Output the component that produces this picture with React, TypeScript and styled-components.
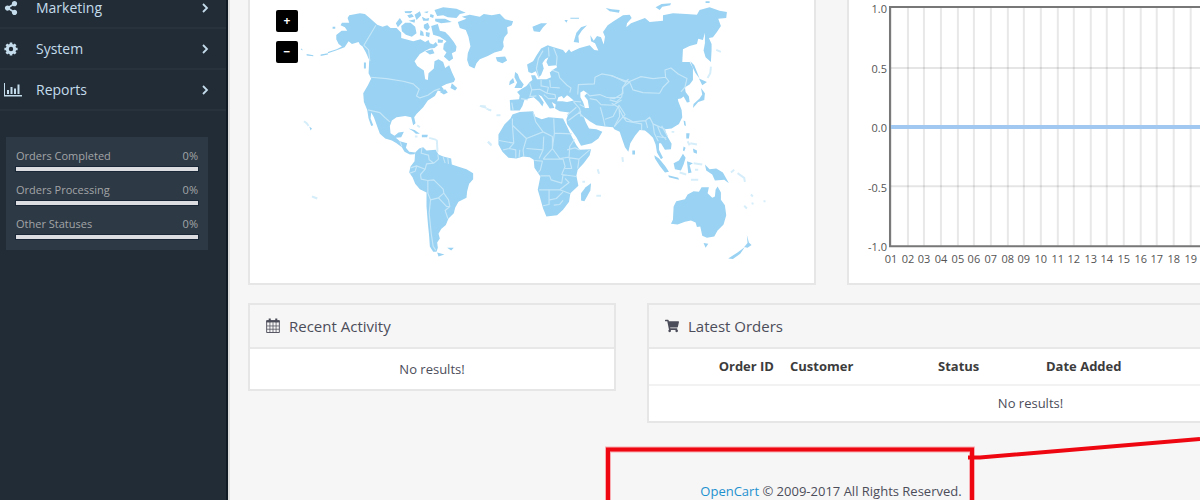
import React from "react";
import styled, { createGlobalStyle } from "styled-components";
import { FaShareAlt, FaShoppingCart } from "react-icons/fa";

const GlobalStyle = createGlobalStyle`
  * { box-sizing: border-box; }
  body {
    margin: 0;
    background: #f6f6f6;
    color: #4c4d5a;
    font-family: "Open Sans", "Noto Sans", sans-serif;
    font-size: 12px;
    font-weight: 500;
    line-height: 18px;
  }
`;

const Page = styled.div`
  position: relative;
  display: flex;
  height: 100vh;
  overflow: hidden;
`;

const Sidebar = styled.aside`
  flex: none;
  width: 230px;
  background: #222c36;
  border-right: 2px solid #dedede;
  box-shadow: inset -2px 0 #111b25;
`;

const Menu = styled.ul`
  list-style: none;
  margin: -12px 2px 0 0;
  padding: 0;
`;

const MenuItem = styled.li`
  border-bottom: 2px solid #27323c;
`;

const MenuLink = styled.a`
  display: flex;
  align-items: center;
  height: 39px;
  padding: 0 16px 0 4px;
  color: #c4dcec;
  font-size: 14px;
  text-decoration: none;

  span { flex: 1; }
`;

const MenuIcon = styled.i`
  display: flex;
  width: 32px;
`;

const Stats = styled.dl`
  margin: 26px 20px 0 6px;
  padding: 11px 10px;
  background: #2d3945;
  color: #a3a5a7;
  font-size: 11px;
  line-height: 16px;
`;

const Stat = styled.div`
  display: grid;
  grid-template-columns: 1fr auto;
  grid-template-rows: 19px 4px;
  height: 34px;
  dt, dd { margin: 0; }
  &:last-child { height: 23px; }
`;

const Bar = styled.div`
  grid-column: 1 / -1;
  background: #dcdde0;
  box-shadow: 0 0 0 1px #1a2737;
`;

const Main = styled.main`
  flex: 1;
  min-width: 0;
  padding: 0 18px;
`;

const Content = styled.div`
  display: grid;
  grid-template-columns: repeat(12, 1fr);
  gap: 18px 31px;
  align-items: start;
  min-width: 1166px;
`;

const Panel = styled.section<{ $span: number; $open?: boolean }>`
  position: relative;
  grid-column: span ${(p) => p.$span};
  background: #fff;
  border: 2px solid #e6e6e6;
  border-top-width: ${(p) => (p.$open ? 0 : 2)}px;

  > svg { display: block; width: 100%; }
`;

const PanelHead = styled.h3`
  display: flex;
  align-items: center;
  gap: 9px;
  height: 44px;
  margin: 0;
  padding: 0 16px;
  background: #f6f6f6;
  border-bottom: 2px solid #e8e8e8;
  color: #4c4d5a;
  font-size: 15px;
  font-weight: 500;
`;

const Empty = styled.p`
  margin: 0;
  padding: 11px 8px;
  font-size: 13px;
  text-align: center;
`;

const ZoomControls = styled.div`
  position: absolute;
  top: 10px;
  left: 26px;
  display: grid;
  gap: 9px;
`;

const ZoomButton = styled.button`
  width: 22px;
  height: 22px;
  padding: 0;
  border: 0;
  border-radius: 2px;
  background: #000;
  color: #fff;
  font: 700 12px/20px "Open Sans", sans-serif;
`;

const Table = styled.table`
  width: 100%;
  border-collapse: collapse;
  table-layout: fixed;
  font-size: 13px;

  th, td { height: 36px; padding: 0 8px; text-align: left; }
  th { color: #3c3c3c; font-weight: 700; }
  th:first-child { text-align: right; }
  td { border-top: 2px solid #f2f2f2; text-align: center; }
`;

const Footer = styled.footer`
  min-width: 1166px;
  padding: 59px 0 20px;
  font-size: 13px;
  text-align: center;

  a { color: #1e91cf; text-decoration: none; }
`;

const Callout = styled.svg`
  position: absolute;
  top: 0;
  left: 0;
  pointer-events: none;
`;

const CogIcon = () => (
  <svg width="14" height="14" viewBox="0 0 14 14" fill="none" stroke="currentColor">
    <circle cx="7" cy="7" r="3.700" strokeWidth="3" />
    <path
      strokeWidth="2.600"
      d="M7 .4v2.500M7 11.100v2.500M.4 7h2.500M11.100 7h2.500M2.400 2.400l1.600 1.600M10 10l1.600 1.600M2.400 11.600L4 10M10 4l1.600-1.600"
    />
  </svg>
);

const BarChartIcon = () => (
  <svg width="18" height="14" viewBox="0 0 18 14" fill="currentColor">
    <path d="M0 0h1v12h17v1.500H0zM3 7h2v4H3zM6.500 4h2v7h-2zM10 5.500h2V11h-2zM13.500 1.500h2V11h-2z" />
  </svg>
);

const ChevronIcon = () => (
  <svg width="9" height="12" viewBox="0 0 9 12" fill="none" stroke="currentColor" strokeWidth="1.800">
    <path d="M2 2l4 4-4 4" />
  </svg>
);

const CalendarIcon = () => (
  <svg width="14" height="17" viewBox="0 0 15 17" fill="none" stroke="currentColor">
    <path d="M.7 3.500h13.600v12.500H.7z" />
    <path d="M.5 4h14" strokeWidth="2.400" />
    <path d="M4 1v4M11 1v4" strokeWidth="2.200" />
    <path d="M4.200 5v11M7.500 5v11M10.800 5v11M1 9h13M1 12.500h13" strokeWidth=".8" />
  </svg>
);

const AMERICAS = [
  "M109 105L125 92 142 92 135 82 122 76 126 68 148 68 143 54 148 46 180 40 195 42 212 56 232 74 248 80 262 76 272 84 290 84 304 98 304 114 318 118 340 124 362 118 376 126 386 120 390 130 400 134 408 126 414 136 404 144 390 146 378 152 360 162 344 184 352 198 372 212 376 238 384 240 386 220 402 206 404 184 416 178 430 186 436 204 448 196 456 216 466 238 462 246 440 252 425 260 432 268 428 276 414 272 405 288 384 302 370 322 350 342 343 352 347 370 340 376 334 352 316 348 290 352 276 362 270 378 272 400 284 408 296 398 312 396 304 412 288 414 300 424 322 430 318 444 328 456 346 458 344 463 330 464 314 456 306 442 290 430 276 422 256 416 240 402 232 380 222 352 214 338 212 356 220 376 214 378 206 356 202 330 192 306 190 280 204 256 214 236 206 220 208 180 198 158 188 140 180 134 176 126 156 132 146 124 134 142 108 152 84 160 84 156 110 148 126 140 116 132 109 118Z",
  "M346 458L358 446 370 442 380 452 408 450 416 464 430 470 454 476 456 494 474 500 500 508 520 520 520 538 508 552 502 574 500 594 476 606 466 624 462 640 446 656 438 676 424 688 416 702 420 716 412 728 414 744 410 756 400 756 390 740 388 710 384 670 380 620 380 578 360 568 346 552 338 532 328 518 332 500 344 484Z",
  "M412 758L434 764 416 770ZM442 744L462 744 454 752Z",
  "M474 66L500 56 486 50 510 44 540 50 552 42 576 46 600 41 616 58 640 64 636 76 622 82 624 100 614 112 610 126 612 140 606 152 584 158 564 168 540 178 530 190 524 206 508 198 502 180 504 160 512 140 506 110 498 90 480 84Z",
  "M304 78L316 68 332 68 346 80 350 100 336 110 318 104 306 94ZM288 70L300 54 308 66 294 82ZM314 34L338 33 332 40 316 39ZM322 46L336 42 342 50 328 54ZM344 44L360 34 364 46 350 60ZM326 62L346 58 344 68ZM366 50L378 56 388 54 386 62 370 62ZM372 74L384 68 390 82 382 92 372 84ZM362 90L370 96 372 108 360 106ZM378 96L390 98 388 112 378 108ZM372 36L386 34 382 40ZM392 42L402 46 400 54 390 50Z",
  "M404 30L430 22 470 26 498 38 480 42 470 54 444 52 430 46 412 48ZM406 56L436 56 456 66 424 70 406 64ZM394 78L414 72 420 92 436 96 448 108 462 126 470 140 468 154 456 160 460 176 448 184 432 170 440 158 430 148 432 132 440 124 420 110 400 104ZM376 154L398 148 404 160 390 164ZM414 118L430 120 428 128 414 128Z",
  "M456 250L472 264 466 272 452 264ZM436 268L444 278 432 284 420 276ZM326 386L344 390 360 402 348 402 340 394ZM366 405L384 405 382 412 366 412ZM28 380L36 386 32 392ZM2 148l4-2 2 6zM20 162l20 4v3l-20-2zM62 164l22-4v4l-22 4zM98 80h8v6h-8zM192 188h6v18h-6z",
];

const AMERICAS_FAINT =
  "M12 364l8 6 6 8M352 376l8 6M345 410h8M388 414l22 6M411 420l2 36M544 318l14 2M560 326l14 6M36 590l16 6M565 425l10 12M540 210";

const AMERICAS_BORDERS =
  "M228 76L192 136 206 150 210 184M212 232L260 236 310 244 340 252 358 268 350 288 360 294 384 286 404 272 420 266M204 330L240 338 254 352 270 366M300 424L306 440M366 444L364 460 386 466 388 480 402 490 416 478 414 464M430 472L436 490M444 474L446 492M402 490L380 492 376 508 362 524 364 538 384 542 402 540 430 568 432 580 446 600 450 620 436 632 444 656M332 504L350 498 376 508M330 520L346 514 350 500M384 542L384 580 392 600 388 640 394 700 400 740 408 752M392 600L416 594 432 580M416 594L440 620 450 620";

const OLD_WORLD = [
  "M90 300L118 298 120 286 112 276 124 268 140 258 150 246 158 240 154 226 166 226 172 238 200 238 214 232 210 218 222 208 232 202 230 196 206 198 200 186 206 172 196 178 188 190 192 206 184 226 176 232 168 214 156 220 146 216 142 194 160 184 172 164 184 146 204 136 222 142 250 150 258 160 268 148 274 156 300 144 330 136 344 150 356 152 346 130 334 124 332 106 342 122 352 108 364 112 372 134 376 110 370 96 384 76 404 62 430 46 450 44 456 54 442 70 440 82 454 70 480 60 496 54 510 66 550 62 550 46 580 40 620 42 652 44 660 30 690 22 720 32 742 36 740 54 716 56 724 78 712 96 700 112 688 114 696 132 696 150 694 186 678 172 672 152 676 130 676 98 670 120 656 116 652 132 630 138 610 148 608 186 630 186 640 204 640 240 630 254 616 262 618 276 628 290 630 306 622 308 612 290 604 296 588 298 580 292 592 284 596 304 606 330 608 352 598 372 576 386 556 388 562 408 576 432 574 448 556 450 544 430 538 430 538 450 550 474 544 478 532 458 528 434 520 414 508 402 496 392 480 390 466 408 452 430 446 456 436 442 426 414 420 396 404 388 400 382 376 380 350 376 330 364 312 350 318 366 328 386 350 388 368 396 356 416 336 430 304 438 290 412 262 372 260 358 268 338 240 334 226 326 228 314 216 306 224 324 210 326 198 308 186 290 176 284 192 308 188 320 178 306 162 292 146 296 134 300 128 318 120 332 92 332Z",
  "M98 344L120 336 160 334 166 350 186 358 206 352 250 356 262 380 276 410 290 436 300 450 334 448 330 466 312 490 294 510 290 528 296 558 272 580 268 606 250 630 232 646 200 650 190 626 180 590 174 570 182 530 164 504 162 480 150 472 130 470 110 476 86 474 68 456 56 434 56 404 74 374 92 356Z",
  "M334 550L332 572 314 604 304 602 304 580 318 562Z",
  "M106 216L114 222 120 238 132 254 126 264 104 264 112 248 104 232ZM90 244L100 234 104 248 88 256ZM48 172L76 170 82 182 68 190 52 184ZM158 80L184 70 202 70 190 82 180 96 162 94ZM322 76L306 92 296 108 298 128 282 126 290 98 304 82ZM254 60l10 0-4 8zM272 53h26v3h-26zM378 24L396 28 420 30 418 38 390 34ZM528 22L546 12 574 10 572 16 548 20 540 30ZM678 4h12v5h-12z",
  "M632 184L644 196 656 226 660 236 648 220 638 200ZM658 236L682 246 668 256ZM664 264L676 280 674 300 656 306 640 324 642 312 660 296 668 284ZM612 362l5 2 2 14-5-2zM620 400h10l-2 16h-8z",
  "M524 466L538 476 556 498 568 516 556 518 540 498 526 476ZM566 526L596 534 598 540 568 532ZM582 490L598 482 610 462 618 474 612 494 604 512 586 508ZM622 484L640 490 630 496 636 518 626 520ZM676 494L690 508 710 506 730 518 748 550 734 540 706 542 698 524 680 512ZM640 446l12 6v10l-10-4zM612 440l6 4-4 10-4-2zM458 452h8v12h-8z",
  "M574 672L580 660 582 620 590 604 616 598 624 584 642 574 658 576 666 562 688 562 684 580 698 594 706 590 708 570 714 560 724 578 724 600 736 616 740 646 732 674 714 692 704 710 682 714 668 708 662 680 652 682 648 668 634 662 616 666 594 674Z",
  "M672 730L686 732 678 744ZM802 706L808 728 816 736 804 744 794 742 804 730ZM796 742L782 762 760 778 746 776 774 758Z",
];

const OLD_WORLD_FAINT =
  "M0 318l20 6M26 330h8M50 346h12M24 426l10 8M354 508l4 14M308 546h8M350 588h14M428 472l2 14M428 472M710 150l14 6M600 518l20 6M634 540l22 0M642 490l26 4M646 510h10M754 518l10-8M774 520l20 14 2 12M814 584l6 6M794 618l8 8M852 604h6M818 608l2 6M632 430l20 4M624 424l6 12M576 396h8M694 200l-2 20-8 14";

const OLD_WORLD_BORDERS = [
  "M178 234L170 206 176 176 190 152M206 142L208 170M222 144L232 170 230 196M216 210L236 218 240 234 262 256 274 264 270 278M210 240L212 262 240 264M184 240L184 258 206 262 202 280 226 284 228 296M150 250L156 270 150 290 170 288M156 270L180 268 202 280M96 308L100 330M124 296L144 300M192 284L206 296 226 296",
  "M294 284L296 254 344 252 346 232 366 222 400 228 436 246 446 238 428 264 430 280 404 296 380 292 360 284 330 288 320 278M330 296L350 300 364 314 400 316 426 300M390 300L410 306 424 294M300 314L320 324M282 306L300 326 304 350M290 322L262 346M304 334L266 362M296 336L312 352M362 322L370 352 376 378M376 358L400 350 418 316 436 344 404 380M280 304L304 306",
  "M390 226L446 246 484 230 520 236 558 232 568 244 550 262 540 280 490 278 460 270 450 246M558 232L556 210 574 204 596 222 622 236 616 262 604 276M390 294L426 292 430 262 450 246M396 310L416 322 430 350 460 366 498 362 510 352 520 372 556 388M418 324L420 350 404 380M430 350L440 364 486 372 486 390M498 362L504 384M520 372L524 400 536 424M534 380L544 404 560 420M546 378L564 410M532 410L560 414",
  "M98 376L140 416 190 396 168 366 160 336M98 376L98 356M222 356L224 400 276 402M190 396L218 410 218 446 190 478M140 416L130 450 132 470M58 422L102 430 98 376M102 430L88 446 108 450 108 474M70 450L88 446M120 450L118 472M140 446L190 450 192 410M190 450L178 476M224 400L218 446 240 476 268 472 270 440 284 418M190 478L250 478 256 500 246 524 290 530M270 474L298 478 330 450M298 478L294 506M268 472L276 506 256 506M164 482L188 484 182 510 176 518M182 528L210 528 214 540 246 550 250 524M178 570L240 570 268 548 256 536M208 570L208 614 190 618M240 570L272 582M210 600L230 596 250 576M222 616L240 614 250 602M262 450L286 444 300 450",
];

const HEADERS: { label: string; width?: number }[] = [
  { label: "Order ID", width: 133 },
  { label: "Customer", width: 148 },
  { label: "Status", width: 108 },
  { label: "Date Added" },
];

const STATS = ["Orders Completed", "Orders Processing", "Other Statuses"];

const MENU = [
  { label: "Marketing", icon: <FaShareAlt size={14} /> },
  { label: "System", icon: <CogIcon /> },
  { label: "Reports", icon: <BarChartIcon /> },
];

const Shapes = ({ land, faint, borders }: { land: string[]; faint: string; borders: string[] }) => (
  <>
    {land.map((d) => <path key={d} d={d} fill="#99d2f2" />)}
    <path d={faint} fill="none" stroke="#d6eefa" strokeWidth="6" />
    {borders.map((d) => (
      <path key={d} d={d} fill="none" stroke="#c5e6f8" strokeWidth="3.500" strokeLinejoin="round" />
    ))}
  </>
);

const WorldMap = () => (
  <svg viewBox="250 0 564 283" role="img" aria-label="World map">
    <g transform="translate(300 0) scale(.33333)">
      <Shapes land={AMERICAS} faint={AMERICAS_FAINT} borders={[AMERICAS_BORDERS]} />
    </g>
    <g transform="translate(480 0) scale(.33333)">
      <Shapes land={OLD_WORLD} faint={OLD_WORLD_FAINT} borders={OLD_WORLD_BORDERS} />
      <path
        fill="#fff"
        d="M232 304L236 292 246 288 252 296 262 286 268 290 282 302 262 306 248 304ZM302 278L312 272 322 280 314 288 324 300 328 324 316 324 310 306 302 292Z"
      />
    </g>
  </svg>
);

const DAYS = Array.from({ length: 19 }, (_, i) => String(i + 1).padStart(2, "0"));
const TICKS = ["1.0", "0.5", "0.0", "-0.5", "-1.0"];
const dayX = (i: number) => 41 + Math.round(i * 16.65);

const Chart = () => (
  <svg viewBox="0 0 564 283" role="img" aria-label="Sales analytics">
    {DAYS.map((day, i) => (
      <rect key={day} x={dayX(i)} y="7" width="2" height="239" fill="#e8e8e8" />
    ))}
    <path d="M41 68h500M41 186.500h500" stroke="#000" strokeOpacity=".1" strokeWidth="2" />
    <path d="M41 127h500" stroke="#a0c8f0" strokeWidth="4" />
    <path d="M41 7h500v239.500H41z" fill="none" stroke="#777" strokeWidth="2" />
    <g fill="#545454" fontSize="11">
      {TICKS.map((tick, i) => (
        <text key={tick} x="38" y={13 + Math.round(i * 59.5)} textAnchor="end">{tick}</text>
      ))}
      {DAYS.map((day, i) => (
        <text key={day} x={dayX(i) + 1} y="263" textAnchor="middle">{day}</text>
      ))}
    </g>
  </svg>
);

export default function App() {
  return (
    <Page>
      <GlobalStyle />
      <Sidebar>
        <Menu>
          {MENU.map(({ label, icon }) => (
            <MenuItem key={label}>
              <MenuLink href="#">
                <MenuIcon>{icon}</MenuIcon>
                <span>{label}</span>
                <ChevronIcon />
              </MenuLink>
            </MenuItem>
          ))}
        </Menu>
        <Stats>
          {STATS.map((label) => (
            <Stat key={label}>
              <dt>{label}</dt>
              <dd>0%</dd>
              <Bar />
            </Stat>
          ))}
        </Stats>
      </Sidebar>
      <Main>
        <Content>
          <Panel $span={6} $open>
            <WorldMap />
            <ZoomControls>
              <ZoomButton aria-label="Zoom in">+</ZoomButton>
              <ZoomButton aria-label="Zoom out">−</ZoomButton>
            </ZoomControls>
          </Panel>
          <Panel $span={6} $open>
            <Chart />
          </Panel>
          <Panel $span={4}>
            <PanelHead><CalendarIcon /> Recent Activity</PanelHead>
            <Empty>No results!</Empty>
          </Panel>
          <Panel $span={8}>
            <PanelHead><FaShoppingCart size={14} /> Latest Orders</PanelHead>
            <Table>
              <colgroup>
                {HEADERS.map(({ label, width }) => <col key={label} width={width} />)}
              </colgroup>
              <thead>
                <tr>{HEADERS.map(({ label }) => <th key={label} scope="col">{label}</th>)}</tr>
              </thead>
              <tbody>
                <tr><td colSpan={HEADERS.length}>No results!</td></tr>
              </tbody>
            </Table>
          </Panel>
        </Content>
        <Footer>
          <a href="#">OpenCart</a> © 2009-2017 All Rights Reserved.
        </Footer>
      </Main>
      <Callout width="1200" height="500" fill="none" stroke="#ee0611" aria-hidden="true">
        <path d="M608 500V449.500H972V500" stroke="#f8aeb2" strokeWidth="6" />
        <path d="M608 500V449.500H972V500" strokeWidth="4" />
        <path d="M968 457.500L980 457.500 1200 439" strokeWidth="4" />
      </Callout>
    </Page>
  );
}
